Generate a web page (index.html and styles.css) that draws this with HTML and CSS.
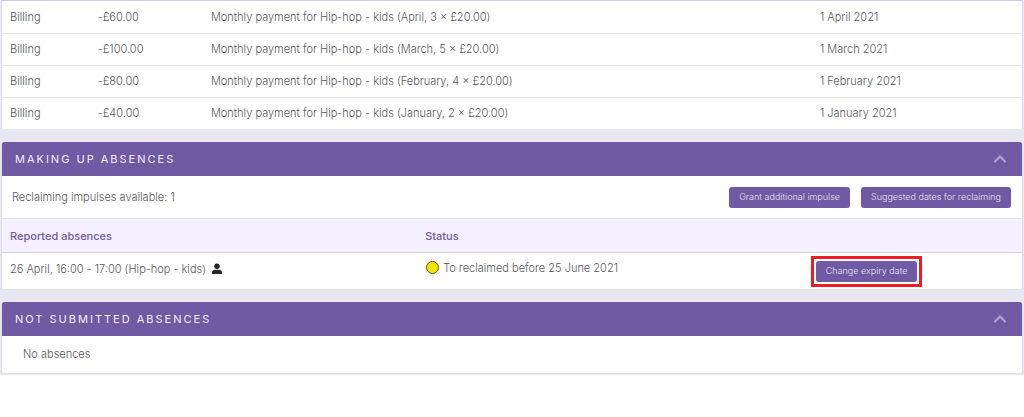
FILE: index.html
```html
<!DOCTYPE html>
<html lang="en">
<head>
<meta charset="utf-8">
<meta name="viewport" content="width=device-width, initial-scale=1">
<title>Absences</title>
<link rel="stylesheet" href="styles.css">
</head>
<body>
<main class="page">
  <section class="panel panel-open">
    <table class="grid billing">
      <colgroup><col class="c-type"><col class="c-amount"><col class="c-title"><col class="c-date"></colgroup>
      <tbody>
        <tr><td>Billing</td><td>-£60.00</td><td>Monthly payment for Hip-hop - kids (April, 3 × £20.00)</td><td>1 April 2021</td></tr>
        <tr><td>Billing</td><td>-£100.00</td><td>Monthly payment for Hip-hop - kids (March, 5 × £20.00)</td><td>1 March 2021</td></tr>
        <tr><td>Billing</td><td>-£80.00</td><td>Monthly payment for Hip-hop - kids (February, 4 × £20.00)</td><td>1 February 2021</td></tr>
        <tr><td>Billing</td><td>-£40.00</td><td>Monthly payment for Hip-hop - kids (January, 2 × £20.00)</td><td>1 January 2021</td></tr>
      </tbody>
    </table>
  </section>

  <section class="panel">
    <header class="panel-head">
      <h2 class="panel-title">Making up absences</h2>
      <button class="toggle" type="button" aria-label="Collapse making up absences">
        <svg class="chevron" viewBox="0 0 14 8" aria-hidden="true"><path d="M1.500 7 7 1.500 12.500 7"/></svg>
      </button>
    </header>
    <div class="toolbar">
      <p class="toolbar-text">Reclaiming impulses available: 1</p>
      <div class="actions">
        <button class="btn" type="button">Grant additional impulse</button>
        <button class="btn" type="button">Suggested dates for reclaiming</button>
      </div>
    </div>
    <table class="grid absences">
      <colgroup><col class="c-reported"><col class="c-status"><col class="c-action"></colgroup>
      <thead>
        <tr><th scope="col">Reported absences</th><th scope="col">Status</th><td></td></tr>
      </thead>
      <tbody>
        <tr>
          <td><span class="with-icon">26 April, 16:00 - 17:00 (Hip-hop - kids)
            <svg class="person" viewBox="0 0 10 12" aria-hidden="true"><circle cx="5" cy="3.200" r="2.700"/><path d="M0 11V9.500C0 7.600 1.400 6.700 3 6.700h4c1.600 0 3 .9 3 2.800V11z"/></svg></span></td>
          <td><span class="with-icon tight"><span class="dot"></span>To reclaimed before 25 June 2021</span></td>
          <td><span class="marked"><button class="btn" type="button">Change expiry date</button></span></td>
        </tr>
      </tbody>
    </table>
  </section>

  <section class="panel">
    <header class="panel-head">
      <h2 class="panel-title">Not submitted absences</h2>
      <button class="toggle" type="button" aria-label="Collapse not submitted absences">
        <svg class="chevron" viewBox="0 0 14 8" aria-hidden="true"><path d="M1.500 7 7 1.500 12.500 7"/></svg>
      </button>
    </header>
    <p class="empty">No absences</p>
  </section>
</main>
</body>
</html>
```
FILE: styles.css
```css
* { box-sizing: border-box; }

body {
  margin: 0;
  background: #fff;
  color: #56585e;
  font: 300 11px/16px Inter, "Open Sans", sans-serif;
}

.page {
  display: flex;
  flex-direction: column;
  gap: 12px;
  padding: 0 1px 1px;
  background: #e8e6f1;
}

.panel {
  overflow: hidden;
  border-radius: 3px;
  background: #fff;
  border: 1px solid #e2dfeb;
  border-top: 0;
}

.panel-open {
  border-top: 1px solid #d3cfe2;
  border-bottom-color: #e8e6f1;
  border-radius: 0 0 2px 2px;
}

.panel-head {
  display: flex;
  align-items: center;
  justify-content: space-between;
  height: 34px;
  margin: 0 -1px;
  padding: 0 16px 0 14px;
  background: #705aa3;
}

.panel-title {
  margin: 0;
  color: #f1eef7;
  font-size: 11px;
  font-weight: 400;
  letter-spacing: 2px;
  text-transform: uppercase;
}

.toggle {
  display: flex;
  padding: 0;
  border: 0;
  background: none;
}

.chevron {
  width: 14px;
  height: 8px;
  fill: none;
  stroke: #b5a9d0;
  stroke-width: 2;
}

.grid {
  width: 100%;
  table-layout: fixed;
  border-collapse: collapse;
}

.grid td,
.grid th {
  padding: 0 0 0 8px;
  text-align: left;
  white-space: nowrap;
}

.billing td { height: 32px; }
.billing tr + tr td { border-top: 1px solid #e8e8ec; }

.c-type { width: 8.6%; }
.c-amount { width: 11.1%; }
.c-title { width: 59.7%; }
.c-reported { width: 40.7%; }
.c-status { width: 38.3%; }

.toolbar {
  display: flex;
  align-items: center;
  justify-content: space-between;
  height: 42px;
  padding: 0 11px 0 10px;
}

.toolbar-text { margin: 0; }

.actions {
  display: flex;
  gap: 11px;
}

.btn {
  display: block;
  height: 21px;
  padding: 0 10px;
  border: 0;
  border-radius: 3px;
  background: #705aa3;
  color: #e5e0f0;
  font: 300 9px/16px Inter, "Open Sans", sans-serif;
}

.marked {
  display: inline-block;
  vertical-align: middle;
  outline: 3px solid #ed1c24;
  outline-offset: 2px;
}

.absences thead tr {
  height: 34px;
  border-top: 1px solid #e4e1ee;
  border-bottom: 1px solid #d6d1e4;
  background: #f4f0ff;
}

.absences th {
  color: #705aa3;
  font-weight: 500;
}

.absences tbody tr { height: 36px; }
.absences tbody td { padding-bottom: 4px; }
.absences tbody td:last-child { padding: 1px 0 0 8px; }

.with-icon {
  display: inline-flex;
  align-items: center;
  gap: 6px;
}

.with-icon.tight { gap: 4px; }

.person {
  width: 10px;
  height: 12px;
  fill: #20252b;
}

.dot {
  width: 13px;
  height: 13px;
  margin-left: 1px;
  border: 1px solid #5d5920;
  border-radius: 50%;
  background: #f3e500;
}

.empty {
  margin: 0;
  padding: 10px 21px 11px;
}
```
